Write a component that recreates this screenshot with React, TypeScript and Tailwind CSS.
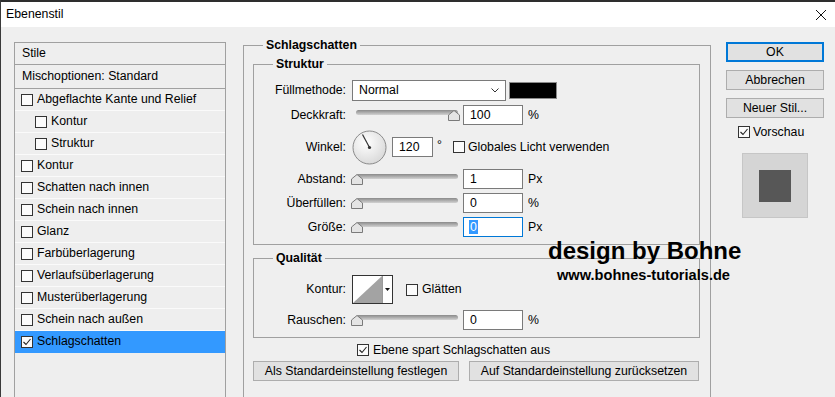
import React from 'react';

const font = "font-['Liberation_Sans',Arial,sans-serif]";

function Check({ checked }: { checked?: boolean }) {
    return (
        <span className="w-[12px] h-[12px] border border-[#333333] bg-[#fbfbfb] flex items-center justify-center shrink-0">
            {checked && (
                <svg width="10" height="10" viewBox="0 0 10 10">
                    <polyline points="1.5,5 4,7.5 8.5,2" fill="none" stroke="#222" strokeWidth="1.1" />
                </svg>
            )}
        </span>
    );
}

function Field({ value, w = 60, focused }: { value: string; w?: number; focused?: boolean }) {
    return (
        <span
            style={{ width: w }}
            className={
                'h-[20px] bg-white flex items-center pl-[6px] shrink-0 border ' +
                (focused ? 'border-[#0078d7]' : 'border-[#7a7a7a]')
            }
        >
            {focused ? <span className="bg-[#3399ff] text-white px-[1px] -ml-[1px] leading-[14px]">{value}</span> : value}
        </span>
    );
}

function Slider({ atEnd }: { atEnd?: boolean }) {
    return (
        <span className="relative w-[110px] h-[20px] ml-[4px] shrink-0">
            <span className="absolute left-[6px] right-[2px] top-[5px] h-[5px] rounded-full bg-linear-to-b from-[#8a8a8a] to-[#d2d2d2]" />
            <svg
                width="12"
                height="11"
                viewBox="0 0 12 11"
                className={'absolute top-[5px] ' + (atEnd ? 'right-0' : 'left-[1px]')}
            >
                <polygon points="6,0.5 11.5,5 11.5,10.5 0.5,10.5 0.5,5" fill="#e4e4e4" stroke="#7a7a7a" />
            </svg>
        </span>
    );
}

function Label({ children }: { children: React.ReactNode }) {
    return <span className="w-[92px] text-right shrink-0">{children}</span>;
}

function Button({ children, w, primary }: { children: React.ReactNode; w: number; primary?: boolean }) {
    return (
        <div
            style={{ width: w }}
            className={
                'h-[20px] flex items-center justify-center bg-[#e1e1e1] ' +
                (primary ? 'border-2 border-[#0078d7]' : 'border border-[#adadad]')
            }
        >
            {children}
        </div>
    );
}

const styleRows = [
    { label: 'Abgeflachte Kante und Relief' },
    { label: 'Kontur', indent: true },
    { label: 'Struktur', indent: true },
    { label: 'Kontur' },
    { label: 'Schatten nach innen' },
    { label: 'Schein nach innen' },
    { label: 'Glanz' },
    { label: 'Farbüberlagerung' },
    { label: 'Verlaufsüberlagerung' },
    { label: 'Musterüberlagerung' },
    { label: 'Schein nach außen' },
    { label: 'Schlagschatten', checked: true, selected: true },
];

export default function App() {
    return (
        <div className={`relative w-[835px] h-[397px] overflow-hidden bg-[#efefef] border-l border-[#3a3a3a] text-[12.3px] text-black ${font}`}>
            <div className="h-[2px] bg-[#2e2e2e]" />
            <div className="h-[25px] bg-white flex items-center justify-between pl-[5px] pr-[8px]">
                <span>Ebenenstil</span>
                <svg width="12" height="12" viewBox="0 0 12 12">
                    <path d="M1 1 L11 11 M11 1 L1 11" stroke="#111" strokeWidth="1" />
                </svg>
            </div>

            <div className="flex items-start pl-[13px]">
                {/* Stile list */}
                <div className="mt-[15px] w-[212px] h-[400px] border border-[#a0a0a0] bg-[#eeeeee] shrink-0">
                    <div className="h-[22px] flex items-center pl-[7px] border-b border-[#a0a0a0]">Stile</div>
                    <div className="h-[24px] flex items-center pl-[7px] border-b border-[#a0a0a0]">Mischoptionen: Standard</div>
                    {styleRows.map((r, i) => (
                        <div
                            key={i}
                            className={
                                'h-[22px] flex items-center gap-[4px] border-b ' +
                                (r.indent ? 'pl-[20px] ' : 'pl-[6px] ') +
                                (r.selected ? 'bg-[#3399ff] border-[#3399ff]' : 'border-[#fafafa]')
                            }
                        >
                            <Check checked={r.checked} />
                            <span>{r.label}</span>
                        </div>
                    ))}
                </div>

                {/* Schlagschatten */}
                <fieldset className="mt-[11px] ml-[17px] w-[468px] h-[380px] border border-[#a0a0a0] shrink-0">
                    <legend className="ml-[19px] px-[3px] font-bold leading-[14px]">Schlagschatten</legend>

                    <fieldset className="ml-[9px] mt-[5px] w-[447px] border border-[#a0a0a0] pb-[7px]">
                        <legend className="ml-[19px] px-[3px] font-bold leading-[14px]">Struktur</legend>

                        <div className="flex items-center h-[21px] mt-[9px]">
                            <Label>Füllmethode:</Label>
                            <span className="ml-[6px] w-[154px] h-[21px] bg-white border border-[#7a7a7a] flex items-center justify-between pl-[6px] pr-[6px]">
                                <span>Normal</span>
                                <svg width="8" height="5" viewBox="0 0 8 5">
                                    <polyline points="0.5,0.5 4,4 7.5,0.5" fill="none" stroke="#333" strokeWidth="1" />
                                </svg>
                            </span>
                            <span className="ml-[3px] w-[48px] h-[17px] bg-black border border-[#8a8a8a]" />
                        </div>

                        <div className="flex items-center h-[20px] mt-[4px]">
                            <Label>Deckkraft:</Label>
                            <Slider atEnd />
                            <span className="ml-[3px]"><Field value="100" /></span>
                            <span className="ml-[5px]">%</span>
                        </div>

                        <div className="flex items-center h-[34px] mt-[5px]">
                            <Label>Winkel:</Label>
                            <svg width="35" height="35" viewBox="0 0 35 35" className="ml-[6px] shrink-0">
                                <defs>
                                    <radialGradient id="dial" cx="40%" cy="35%" r="70%">
                                        <stop offset="0%" stopColor="#ffffff" />
                                        <stop offset="100%" stopColor="#d8d8d8" />
                                    </radialGradient>
                                </defs>
                                <circle cx="17.5" cy="17.5" r="16.5" fill="url(#dial)" stroke="#8a8a8a" />
                                <line x1="17.5" y1="17.5" x2="10.5" y2="4.5" stroke="#333" strokeWidth="1.2" />
                                <circle cx="17.5" cy="17.5" r="1.6" fill="#333" />
                            </svg>
                            <span className="ml-[5px]"><Field value="120" w={41} /></span>
                            <span className="ml-[4px] -mt-[4px]">°</span>
                            <span className="ml-[11px]"><Check /></span>
                            <span className="ml-[3px]">Globales Licht verwenden</span>
                        </div>

                        <div className="flex items-center h-[20px] mt-[5px]">
                            <Label>Abstand:</Label>
                            <Slider />
                            <span className="ml-[3px]"><Field value="1" /></span>
                            <span className="ml-[5px]">Px</span>
                        </div>

                        <div className="flex items-center h-[20px] mt-[4px]">
                            <Label>Überfüllen:</Label>
                            <Slider />
                            <span className="ml-[3px]"><Field value="0" /></span>
                            <span className="ml-[5px]">%</span>
                        </div>

                        <div className="flex items-center h-[20px] mt-[4px]">
                            <Label>Größe:</Label>
                            <Slider />
                            <span className="ml-[3px]"><Field value="0" focused /></span>
                            <span className="ml-[5px]">Px</span>
                        </div>
                    </fieldset>

                    <fieldset className="ml-[9px] mt-[6px] w-[447px] border border-[#a0a0a0] pb-[7px]">
                        <legend className="ml-[19px] px-[3px] font-bold leading-[14px]">Qualität</legend>

                        <div className="flex items-center h-[29px] mt-[10px]">
                            <Label>Kontur:</Label>
                            <span className="ml-[6px] w-[41px] h-[29px] flex border border-[#333333] bg-white shrink-0">
                                <svg width="29" height="27" viewBox="0 0 29 27">
                                    <polygon points="0,27 29,0 29,27" fill="#a3a3a3" />
                                </svg>
                                <span className="flex-1 border-l border-[#9a9a9a] flex items-center justify-center">
                                    <svg width="5" height="3" viewBox="0 0 5 3">
                                        <polygon points="0,0 5,0 2.5,3" fill="#111" />
                                    </svg>
                                </span>
                            </span>
                            <span className="ml-[13px]"><Check /></span>
                            <span className="ml-[4px]">Glätten</span>
                        </div>

                        <div className="flex items-center h-[20px] mt-[6px]">
                            <Label>Rauschen:</Label>
                            <Slider />
                            <span className="ml-[3px]"><Field value="0" /></span>
                            <span className="ml-[5px]">%</span>
                        </div>
                    </fieldset>

                    <div className="flex items-center h-[14px] mt-[5px] ml-[113px]">
                        <Check checked />
                        <span className="ml-[4px]">Ebene spart Schlagschatten aus</span>
                    </div>

                    <div className="flex mt-[4px] ml-[9px] gap-[10px]">
                        <Button w={206}>Als Standardeinstellung festlegen</Button>
                        <Button w={230}>Auf Standardeinstellung zurücksetzen</Button>
                    </div>
                </fieldset>

                {/* Buttons right */}
                <div className="ml-[15px] mt-[15px] w-[98px] flex flex-col shrink-0">
                    <Button w={98} primary>OK</Button>
                    <div className="mt-[8px]"><Button w={98}>Abbrechen</Button></div>
                    <div className="mt-[8px]"><Button w={98}>Neuer Stil...</Button></div>
                    <div className="mt-[7px] ml-[12px] flex items-center h-[14px] gap-[3px]">
                        <Check checked />
                        <span>Vorschau</span>
                    </div>
                    <div className="mt-[14px] ml-[16px] w-[66px] h-[65px] bg-[#d5d5d5] border border-[#c6c6c6] flex items-center justify-center">
                        <span className="w-[32px] h-[32px] bg-[#575757]" />
                    </div>
                </div>
            </div>

            <div className="absolute left-[547px] top-[239px] font-bold text-[24px] leading-none">
                design by Bohne
            </div>
            <div className="absolute left-[556px] top-[268px] font-bold text-[14.6px] leading-none">
                www.bohnes-tutorials.de
            </div>
        </div>
    );
}
